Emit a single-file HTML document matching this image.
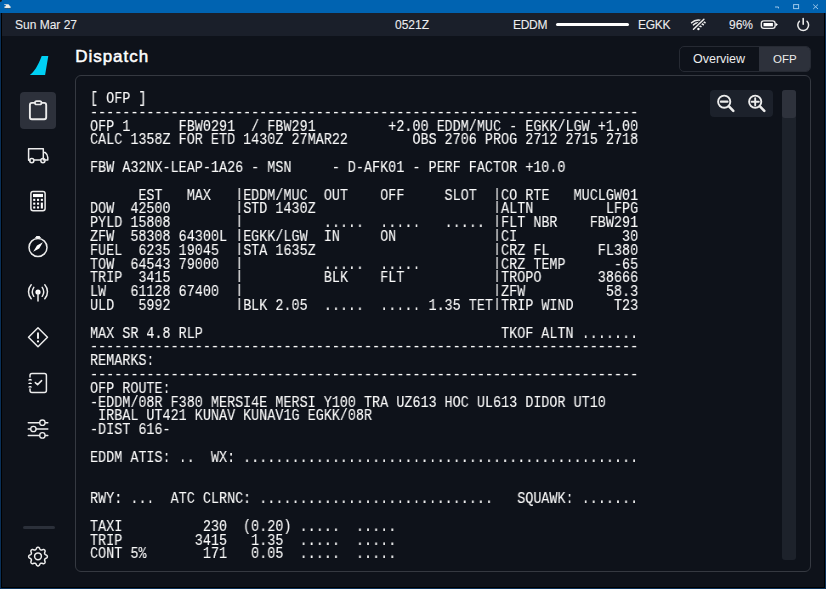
<!DOCTYPE html>
<html><head><meta charset="utf-8">
<style>
html,body{margin:0;padding:0;width:826px;height:589px;overflow:hidden;background:#0a3058;}
*{box-sizing:border-box;}
.abs{position:absolute;}
#title{left:0;top:0;width:826px;height:13px;background:#0063b1;}
#inner{left:1px;top:13px;width:824px;height:575px;background:#000;}
#app{left:2px;top:13px;width:822px;height:574px;background:#0e121a;overflow:hidden;}
#status{left:2px;top:13px;width:822px;height:23px;background:#1a1f2a;}
.sans{font-family:"Liberation Sans",sans-serif;color:#fff;white-space:pre;}
.st{font-size:12px;line-height:14px;top:18px;color:#ececee;-webkit-text-stroke:0.1px #ececee;}
.p{display:inline-block;transform:translateY(-2.6px) scaleY(0.84);transform-origin:50% 50%;}
#ofp{will-change:transform;left:89.9px;top:93px;font-family:"Liberation Mono",monospace;font-size:15.8px;line-height:13.8px;color:#fafafa;-webkit-text-stroke:0.1px #fafafa;white-space:pre;transform:scaleX(0.8502);transform-origin:0 0;}
svg .s{fill:none;stroke:#ececec;stroke-linecap:round;stroke-linejoin:round;}
</style></head><body>
<div id="title" class="abs"></div>
<div id="inner" class="abs"></div>
<div id="app" class="abs"></div>
<div id="status" class="abs"></div>
<div class="abs sans st" style="left:15px">Sun Mar 27</div>
<div class="abs sans st" style="left:395px">0521Z</div>
<div class="abs sans st" style="left:513px;letter-spacing:-0.3px">EDDM</div>
<div class="abs" style="left:555.5px;top:23px;width:73.5px;height:3px;border-radius:2px;background:#fff"></div>
<div class="abs sans st" style="left:638px;letter-spacing:-0.3px">EGKK</div>
<div class="abs sans st" style="left:729px">96%</div>

<div class="abs sans" style="left:75.3px;top:47.4px;font-size:17px;letter-spacing:0.95px;-webkit-text-stroke:0.5px #fff;line-height:20px">Dispatch</div>

<!-- tabs -->
<div class="abs" style="left:679.4px;top:45.5px;width:131.5px;height:26.6px;border:1px solid #262a33;border-radius:5px;background:#0e121a;overflow:hidden">
  <div class="abs" style="left:79px;top:0;width:52px;height:25px;background:#2d313b"></div>
</div>
<div class="abs sans" style="left:693px;top:52px;font-size:12.5px;line-height:14px;color:#ececec">Overview</div>
<div class="abs sans" style="left:773px;top:52px;font-size:11.5px;line-height:14px;color:#ececec">OFP</div>

<!-- panel -->
<div class="abs" style="left:75px;top:75px;width:736px;height:497px;border:1px solid #353941;border-radius:6px;"></div>
<div class="abs" style="left:710px;top:90px;width:63px;height:27px;border-radius:4px;background:#1c212b"></div>
<div class="abs" style="left:782px;top:90px;width:14px;height:470px;border-radius:3px;background:#1d222b"></div>
<div class="abs" style="left:782px;top:90px;width:14px;height:28px;border-radius:3px;background:#2e323c"></div>

<div id="ofp" class="abs">[ OFP ]
--------------------------------------------------------------------
OFP 1      FBW0291  / FBW291         +2.00 EDDM/MUC - EGKK/LGW +1.00
CALC 1358Z FOR ETD 1430Z 27MAR22        OBS 2706 PROG 2712 2715 2718

FBW A32NX-LEAP-1A26 - MSN     - D-AFK01 - PERF FACTOR +10.0

      EST   MAX   <span class="p">|</span>EDDM/MUC  OUT    OFF     SLOT  <span class="p">|</span>CO RTE   MUCLGW01
DOW  42500        <span class="p">|</span>STD 1430Z                      <span class="p">|</span>ALTN         LFPG
PYLD 15808        <span class="p">|</span>          .....  .....   ..... <span class="p">|</span>FLT NBR    FBW291
ZFW  58308 64300L <span class="p">|</span>EGKK/LGW  IN     ON            <span class="p">|</span>CI             30
FUEL  6235 19045  <span class="p">|</span>STA 1635Z                      <span class="p">|</span>CRZ FL      FL380
TOW  64543 79000  <span class="p">|</span>          .....  .....         <span class="p">|</span>CRZ TEMP      -65
TRIP  3415        <span class="p">|</span>          BLK    FLT           <span class="p">|</span>TROPO       38666
LW   61128 67400  <span class="p">|</span>                               <span class="p">|</span>ZFW          58.3
ULD   5992        <span class="p">|</span>BLK 2.05  .....  ..... 1.35 TET<span class="p">|</span>TRIP WIND     T23

MAX SR 4.8 RLP                                     TKOF ALTN .......
--------------------------------------------------------------------
REMARKS:
--------------------------------------------------------------------
OFP ROUTE:
-EDDM/08R F380 MERSI4E MERSI Y100 TRA UZ613 HOC UL613 DIDOR UT10
 IRBAL UT421 KUNAV KUNAV1G EGKK/08R
-DIST 616-

EDDM ATIS: ..  WX: .................................................


RWY: ...  ATC CLRNC: .............................   SQUAWK: .......

TAXI          230  (0.20) .....  .....
TRIP         3415   1.35  .....  .....
CONT 5%       171   0.05  .....  .....</div>

<!-- sidebar -->
<div class="abs" style="left:20px;top:92px;width:36px;height:36.5px;border-radius:4px;background:#2d313b"></div>
<div class="abs" style="left:22.5px;top:525.6px;width:32px;height:3.8px;border-radius:2px;background:#2b303a"></div>
<svg class="abs" style="left:0;top:0" width="826" height="589" stroke-width="1.5">
  <!-- logo -->
  <path d="M29.8 75 C34 72 38 66 41.7 56 L48.3 56 L45.1 75 Z" fill="#00d0f4"/>
  <!-- clipboard -->
  <path class="s" d="M34.6 102.9 H31.9 a2 2 0 0 0 -2 2 V117.2 a2 2 0 0 0 2 2 H44.2 a2 2 0 0 0 2 -2 V104.9 a2 2 0 0 0 -2 -2 H41.8" stroke-width="1.9"/>
  <rect class="s" x="34.9" y="101.1" width="6.6" height="3.4" rx="1.7" stroke-width="1.7"/>
  <!-- truck -->
  <path class="s" d="M29.9 160.2 H28.6 V148.7 H43.3 V159.9 M43.3 152.6 H45.3 Q47.8 154.6 47.8 157.4 V160 H45.3 M34.1 160.1 H40.6"/>
  <circle class="s" cx="31.8" cy="160.6" r="2.1"/>
  <circle class="s" cx="42.9" cy="160.6" r="2.1"/>
  <!-- calculator -->
  <rect class="s" x="30.9" y="191.4" width="14.2" height="19.4" rx="2.2"/>
  <rect x="33" y="193.9" width="10" height="3.2" fill="#fff"/>
  <g fill="#fff">
    <rect x="33.2" y="198.8" width="2.1" height="2.1"/><rect x="37" y="198.8" width="2.1" height="2.1"/><rect x="40.8" y="198.8" width="2.1" height="2.1"/>
    <rect x="33.2" y="202.6" width="2.1" height="2.1"/><rect x="37" y="202.6" width="2.1" height="2.1"/><rect x="40.8" y="202.6" width="2.1" height="5.9"/>
    <rect x="33.2" y="206.4" width="2.1" height="2.1"/><rect x="37" y="206.4" width="2.1" height="2.1"/>
  </g>
  <!-- compass -->
  <circle class="s" cx="38" cy="247.5" r="9"/>
  <path d="M35.6 237.6 H40.4 L39.6 236.6 H36.4 Z" fill="#fff" stroke="#fff" stroke-width="1"/>
  <path d="M33.2 251.8 L37 245.6 L42.9 242.2 L39.2 248.6 Z" fill="#fff"/>
  <!-- antenna -->
  <circle cx="38" cy="292" r="2.6" fill="#fff"/>
  <path class="s" d="M38 292 V301"/>
  <path class="s" d="M33.8 287.3 A8 8 0 0 0 33.8 296.3 M42.2 287.3 A8 8 0 0 1 42.2 296.3"/>
  <path class="s" d="M31.2 284.8 A10.5 10.5 0 0 0 31.2 298.8 M44.8 284.8 A10.5 10.5 0 0 1 44.8 298.8"/>
  <!-- warning -->
  <path class="s" d="M38 327.8 L47.5 337.3 L38 346.8 L28.5 337.3 Z"/>
  <path d="M38 333.3 V337.9" stroke="#ececec" stroke-width="2" stroke-linecap="round"/>
  <circle cx="38" cy="341.4" r="1.1" fill="#fff"/>
  <!-- checklist -->
  <path class="s" d="M30 377 V375.5 a2 2 0 0 1 2 -2 H44.4 a2 2 0 0 1 2 2 V390.6 a2 2 0 0 1 -2 2 H32 a2 2 0 0 1 -2 -2 V389"/>
  <path d="M28.2 380.4 a1.9 1.6 0 0 1 3.8 0 Z M28.2 384 a1.9 1.6 0 0 1 3.8 0 Z M28.2 387.6 a1.9 1.6 0 0 1 3.8 0 Z" fill="#fff"/>
  <path class="s" d="M35.3 382.6 L37.6 384.6 L41.6 380.6"/>
  <!-- sliders -->
  <path class="s" d="M28.3 422.7 H39.5 M45.3 422.7 H47.8 M28.3 429 H30.5 M36.3 429 H47.8 M28.3 435.4 H39.5 M45.3 435.4 H47.8"/>
  <circle class="s" cx="42.4" cy="422.7" r="2.7" stroke-width="1.3"/>
  <circle class="s" cx="33.4" cy="429" r="2.7" stroke-width="1.3"/>
  <circle class="s" cx="42.4" cy="435.4" r="2.7" stroke-width="1.3"/>
  <!-- gear -->
  <path class="s" d="M47.35 556.60 L47.32 556.89 L47.24 557.18 L47.10 557.46 L46.91 557.73 L46.65 557.97 L46.30 558.18 L45.78 558.34 L45.48 558.52 L45.23 558.70 L45.03 558.89 L44.87 559.07 L44.75 559.27 L44.66 559.48 L44.61 559.71 L44.59 559.96 L44.60 560.23 L44.65 560.53 L44.73 560.87 L44.99 561.35 L45.09 561.75 L45.09 562.10 L45.04 562.43 L44.94 562.72 L44.80 562.98 L44.61 563.21 L44.38 563.40 L44.12 563.54 L43.83 563.64 L43.50 563.69 L43.15 563.69 L42.75 563.59 L42.27 563.33 L41.93 563.25 L41.63 563.20 L41.36 563.19 L41.11 563.21 L40.88 563.26 L40.67 563.35 L40.47 563.47 L40.29 563.63 L40.10 563.83 L39.92 564.08 L39.74 564.38 L39.58 564.90 L39.37 565.25 L39.13 565.51 L38.86 565.70 L38.58 565.84 L38.29 565.92 L38.00 565.95 L37.71 565.92 L37.42 565.84 L37.14 565.70 L36.87 565.51 L36.63 565.25 L36.42 564.90 L36.26 564.38 L36.08 564.08 L35.90 563.83 L35.71 563.63 L35.53 563.47 L35.33 563.35 L35.12 563.26 L34.89 563.21 L34.64 563.19 L34.37 563.20 L34.07 563.25 L33.73 563.33 L33.25 563.59 L32.85 563.69 L32.50 563.69 L32.17 563.64 L31.88 563.54 L31.62 563.40 L31.39 563.21 L31.20 562.98 L31.06 562.72 L30.96 562.43 L30.91 562.10 L30.91 561.75 L31.01 561.35 L31.27 560.87 L31.35 560.53 L31.40 560.23 L31.41 559.96 L31.39 559.71 L31.34 559.48 L31.25 559.27 L31.13 559.07 L30.97 558.89 L30.77 558.70 L30.52 558.52 L30.22 558.34 L29.70 558.18 L29.35 557.97 L29.09 557.73 L28.90 557.46 L28.76 557.18 L28.68 556.89 L28.65 556.60 L28.68 556.31 L28.76 556.02 L28.90 555.74 L29.09 555.47 L29.35 555.23 L29.70 555.02 L30.22 554.86 L30.52 554.68 L30.77 554.50 L30.97 554.31 L31.13 554.13 L31.25 553.93 L31.34 553.72 L31.39 553.49 L31.41 553.24 L31.40 552.97 L31.35 552.67 L31.27 552.33 L31.01 551.85 L30.91 551.45 L30.91 551.10 L30.96 550.77 L31.06 550.48 L31.20 550.22 L31.39 549.99 L31.62 549.80 L31.88 549.66 L32.17 549.56 L32.50 549.51 L32.85 549.51 L33.25 549.61 L33.73 549.87 L34.07 549.95 L34.37 550.00 L34.64 550.01 L34.89 549.99 L35.12 549.94 L35.33 549.85 L35.53 549.73 L35.71 549.57 L35.90 549.37 L36.08 549.12 L36.26 548.82 L36.42 548.30 L36.63 547.95 L36.87 547.69 L37.14 547.50 L37.42 547.36 L37.71 547.28 L38.00 547.25 L38.29 547.28 L38.58 547.36 L38.86 547.50 L39.13 547.69 L39.37 547.95 L39.58 548.30 L39.74 548.82 L39.92 549.12 L40.10 549.37 L40.29 549.57 L40.47 549.73 L40.67 549.85 L40.88 549.94 L41.11 549.99 L41.36 550.01 L41.63 550.00 L41.93 549.95 L42.27 549.87 L42.75 549.61 L43.15 549.51 L43.50 549.51 L43.83 549.56 L44.12 549.66 L44.38 549.80 L44.61 549.99 L44.80 550.22 L44.94 550.48 L45.04 550.77 L45.09 551.10 L45.09 551.45 L44.99 551.85 L44.73 552.33 L44.65 552.67 L44.60 552.97 L44.59 553.24 L44.61 553.49 L44.66 553.72 L44.75 553.93 L44.87 554.13 L45.03 554.31 L45.23 554.50 L45.48 554.68 L45.78 554.86 L46.30 555.02 L46.65 555.23 L46.91 555.47 L47.10 555.74 L47.24 556.02 L47.32 556.31 L47.35 556.60Z"/>
  <circle class="s" cx="38" cy="556.3" r="3.4"/>

  <!-- wifi off -->
  <path class="s" d="M691.6 22.8 A9.6 9.6 0 0 1 705 22.6 M693.5 24.8 A6.9 6.9 0 0 1 703.3 24.6 M696.2 27 A3.6 3.6 0 0 1 701 26.6" stroke-width="1.6"/>
  <circle cx="698.4" cy="29" r="1.2" fill="#fff"/>
  <path d="M693.5 29.3 L703.9 19.2" stroke="#1b1f29" stroke-width="3.6" stroke-linecap="round"/>
  <path class="s" d="M693.5 29.3 L703.9 19.2" stroke-width="1.5"/>
  <!-- battery -->
  <rect class="s" x="761.3" y="20.9" width="13.8" height="7.4" rx="2.6" stroke-width="1.3"/>
  <rect x="763.5" y="23" width="9.4" height="3.3" fill="#fff"/>
  <path d="M775.6 22.7 L777.9 24.6 L775.6 26.5 Z" fill="#fff"/>
  <!-- power -->
  <path class="s" d="M799.4 21.3 A5.4 5.4 0 1 0 807 21.3" stroke-width="1.5"/>
  <path class="s" d="M803.2 18.6 V24.2" stroke-width="1.6"/>

  <!-- zoom icons -->
  <circle class="s" cx="724.2" cy="101.7" r="6.1" stroke-width="1.9"/>
  <path class="s" d="M729.2 106.7 L733.3 110.8" stroke-width="2.6"/>
  <path class="s" d="M720.9 101.7 H727.5" stroke-width="2.2" stroke-linecap="butt"/>
  <circle class="s" cx="755.2" cy="101.7" r="6.1" stroke-width="1.9"/>
  <path class="s" d="M760.2 106.7 L764.3 110.8" stroke-width="2.6"/>
  <path class="s" d="M751.6 101.7 H758.8 M755.2 98.1 V105.3" stroke-width="1.9" stroke-linecap="butt"/>

  <!-- title bar glyphs -->
  <path d="M4.2 4.2 H8.8 V5 H4.2 Z M6 5 H9.3 L10 6.6 H5.3 Z M4.3 6.6 H10.9 L10.4 7.9 H4.6 Z" fill="#f0ece6"/><path d="M5.3 8.4 h0.9 M7.3 8.4 h0.9 M9.3 8.4 h0.9" stroke="#5a4a3a" stroke-width="0.9"/><circle cx="0" cy="0" r="2" fill="#1a1a1a"/>
  <path d="M775 7 H778.5 V8.4" stroke="#9cc7ea" stroke-width="1" fill="none"/>
  <rect x="793.6" y="4.6" width="5" height="4" stroke="#9cc7ea" stroke-width="1" fill="none"/>
  <path d="M813.2 4.5 L818 9 M818 4.5 L813.2 9" stroke="#9cc7ea" stroke-width="1"/>
</svg>
</body></html>
